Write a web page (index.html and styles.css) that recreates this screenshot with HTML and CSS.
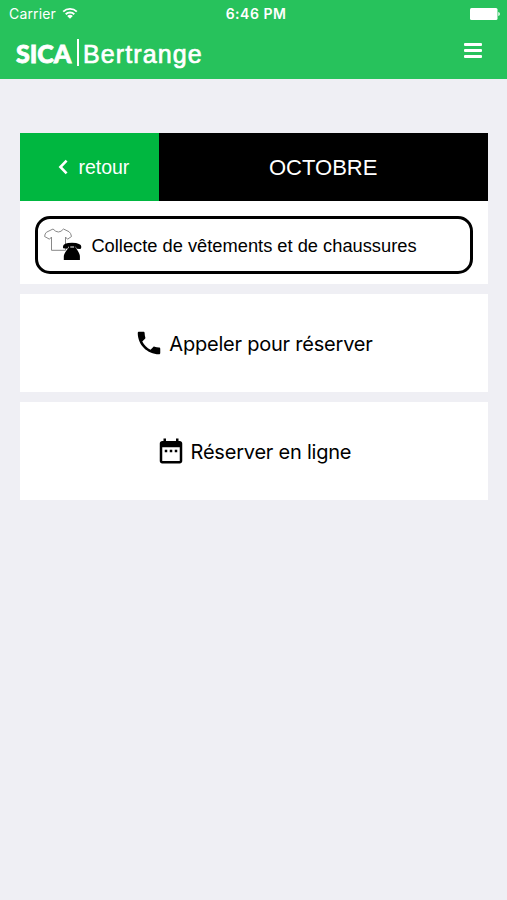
FILE: index.html
```html
<!DOCTYPE html>
<html lang="fr">
<head>
    <meta charset="UTF-8">
    <meta name="viewport" content="width=device-width, initial-scale=1.0">
    <title>SICA Bertrange</title>
    <link rel="stylesheet" href="styles.css">
</head>
<body>
    <div class="header">
        <div class="statusbar">
            <div class="carrier">
                <span class="carrier-name">Carrier</span>
                <svg class="wifi" viewBox="0 0 16 12">
                    <path d="M1.2 4.6a9.8 9.8 0 0 1 13.6 0M3.7 7.2a6.2 6.2 0 0 1 8.6 0" fill="none" stroke="#fff" stroke-width="1.9"/>
                    <path d="M8 11.8L5.2 9a3.9 3.9 0 0 1 5.6 0z" fill="#fff"/>
                </svg>
            </div>
            <div class="time">6:46 PM</div>
            <div class="battery-box">
                <svg class="battery" viewBox="0 0 30 12">
                    <rect x="0" y="0" width="27.5" height="12" rx="1.5" fill="#fff"/>
                    <path d="M28.3 4c2 .6 2 3.4 0 4z" fill="#fff"/>
                </svg>
            </div>
        </div>
        <div class="navbar">
            <div class="logo">
                <span class="logo-sica">SICA</span>
                <span class="logo-line"></span>
                <span class="logo-town">Bertrange</span>
            </div>
            <div class="menu">
                <span class="menu-line"></span>
                <span class="menu-line"></span>
                <span class="menu-line"></span>
            </div>
        </div>
    </div>
    <div class="content">
        <div class="card">
            <div class="card-head">
                <a class="back" href="#">
                    <svg class="chevron" viewBox="0 0 10 16">
                        <path d="M8.6 1.6L2.4 8l6.2 6.4" fill="none" stroke="#fff" stroke-width="2.6"/>
                    </svg>
                    <span class="back-text">retour</span>
                </a>
                <div class="month"><span class="month-text">OCTOBRE</span></div>
            </div>
            <div class="card-body">
                <div class="collect">
                    <svg class="collect-icon" viewBox="0 0 38 34">
                        <path d="M9 1L2.5 4.2Q.8 5.6.6 8.500l4.900 2.700L7.500 9v13.300h14V9l2 2.200 4-2.700q-.6-3.600-2.500-4.800L19.500 1Q14.500 7 9 1z" fill="#fff" stroke="#888" stroke-width="1"/>
                        <path d="M19.200 20.200Q17.500 14.800 28 14.700q11 .3 9 5.500l-.6.9-3.800-.3-.8-2.300h-7.300l-1 2.300z"/>
                        <path d="M24.700 17.500h1.600v2h3.800v-2h1.600v2.200q4.200 5.500 4.200 8.800v3.400H19.800v-3.400q0-3.300 4.900-8.800z"/>
                    </svg>
                    <span class="collect-text">Collecte de vêtements et de chaussures</span>
                </div>
            </div>
        </div>
        <a class="button" href="#">
            <svg class="icon" viewBox="0 0 24 24">
                <path d="M6.620 10.790c1.440 2.830 3.760 5.140 6.590 6.590l2.200-2.200c.27-.27.67-.36 1.020-.24 1.120.37 2.330.57 3.570.57.55 0 1 .45 1 1V20c0 .55-.45 1-1 1-9.390 0-17-7.610-17-17 0-.55.45-1 1-1h3.500c.55 0 1 .45 1 1 0 1.250.2 2.450.57 3.570.11.35.03.74-.25 1.020l-2.200 2.200z"/>
            </svg>
            <span class="button-text">Appeler pour réserver</span>
        </a>
        <a class="button" href="#">
            <svg class="icon" viewBox="0 0 24 24">
                <path d="M9 11H7v2h2v-2zm4 0h-2v2h2v-2zm4 0h-2v2h2v-2zm2-7h-1V2h-2v2H8V2H6v2H5c-1.110 0-1.990.9-1.990 2L3 20c0 1.100.89 2 2 2h14c1.100 0 2-.9 2-2V6c0-1.100-.9-2-2-2zm0 16H5V9h14v11z"/>
            </svg>
            <span class="button-text">Réserver en ligne</span>
        </a>
    </div>
</body>
</html>
```

FILE: styles.css
```css
*{
    box-sizing: border-box;
}
body{
    margin: 0;
    min-height: 900px;
    background-color: #efeff4;
    color: black;
    font-family: "Liberation Sans", Arial, Helvetica, sans-serif;
}
a{
    color: inherit;
    text-decoration: none;
}
svg{
    display: block;
    flex: none;
}
span{
    white-space: nowrap;
}
.header{
    height: 79px;
    background-color: #27c25c;
    color: white;
}
.statusbar{
    height: 27px;
    padding: 0 7px 0 9px;
    display: grid;
    grid-template-columns: 1fr auto 1fr;
    align-items: center;
    font-family: Inter, sans-serif;
    font-size: 14px;
}
.carrier{
    display: flex;
    align-items: center;
    gap: 6px;
    letter-spacing: 0.15px;
}
.wifi{
    width: 16px;
    height: 12px;
    margin-top: -2px;
}
.time{
    padding-left: 3px;
    font-weight: 600;
    letter-spacing: 0.5px;
}
.battery-box{
    display: flex;
    justify-content: flex-end;
}
.battery{
    width: 30px;
    height: 12px;
}
.navbar{
    height: 52px;
    padding: 0 25px 0 16px;
    display: flex;
    justify-content: space-between;
}
.logo{
    display: flex;
    height: 52px;
    line-height: 53px;
}
.logo-sica{
    width: 56px;
    font-family: Lato, sans-serif;
    font-weight: 900;
    font-size: 25px;
    -webkit-text-stroke: 0.8px white;
}
.logo-line{
    width: 2px;
    height: 27px;
    margin: 12px 4px 0 5px;
    background-color: white;
}
.logo-town{
    padding-top: 1px;
    font-size: 25px;
    letter-spacing: 1.1px;
    -webkit-text-stroke: 0.7px white;
}
.menu{
    width: 18px;
    padding-top: 16px;
    display: flex;
    flex-direction: column;
    gap: 3px;
}
.menu-line{
    height: 3px;
    border-radius: 1px;
    background-color: white;
}
.content{
    padding: 54px 19.5px 0 20.4px;
    display: flex;
    flex-direction: column;
    gap: 10px;
}
.card{
    height: 151px;
    background-color: white;
}
.card-head{
    height: 68px;
    display: flex;
    color: white;
}
.back{
    width: 138.5px;
    padding-left: 38px;
    display: flex;
    align-items: center;
    background-color: #00b740;
    font-size: 19.5px;
}
.chevron{
    width: 10px;
    height: 16px;
    margin-right: 10px;
}
.month{
    flex: 1;
    padding-top: 1px;
    display: flex;
    align-items: center;
    justify-content: center;
    background-color: black;
    font-size: 22px;
}
.card-body{
    padding: 15px 15px 0;
}
.collect{
    height: 58px;
    padding-left: 6px;
    display: flex;
    align-items: center;
    border: 3px solid black;
    border-radius: 15px;
    font-size: 18.3px;
}
.collect-icon{
    width: 38px;
    height: 34px;
    margin-right: 9px;
}
.collect-text{
    padding-top: 1px;
}
.button{
    height: 98px;
    padding-right: 1px;
    display: flex;
    align-items: center;
    justify-content: center;
    background-color: white;
    font-family: Inter, sans-serif;
    font-size: 20px;
    letter-spacing: -0.22px;
}
.button-text{
    padding-top: 1px;
}
.icon{
    width: 30px;
    height: 30px;
    margin-right: 5px;
}
```
